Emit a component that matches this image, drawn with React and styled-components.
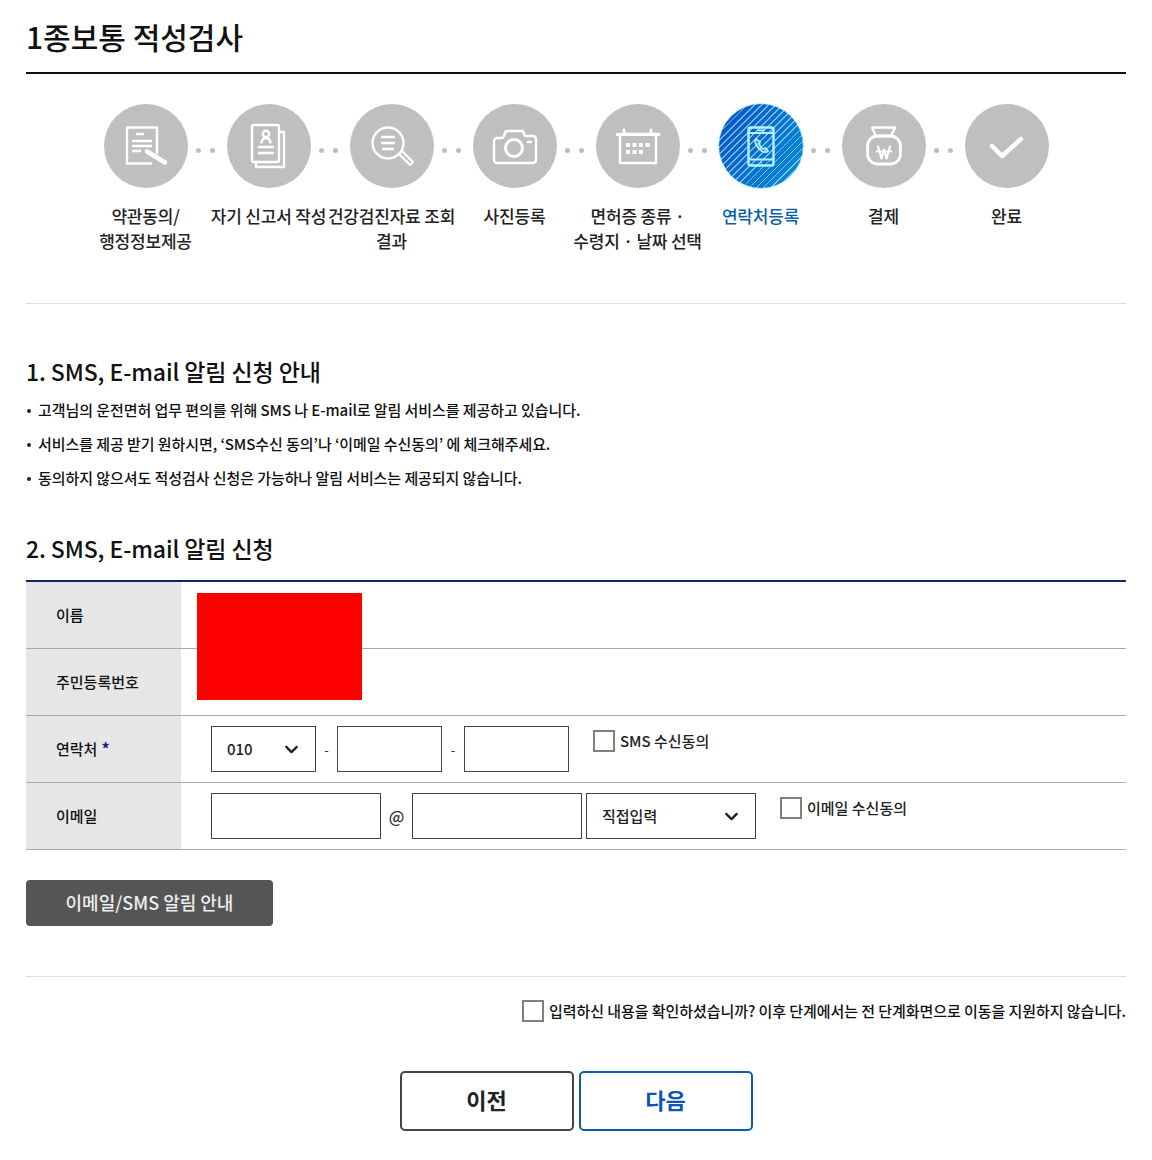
import React from 'react';
import styled, { createGlobalStyle } from 'styled-components';
import { ChevronDown } from 'lucide-react';

const GlobalStyle = createGlobalStyle`
body {
  margin: 0;
  background: #fff;
  color: #111;
  font-family: "Noto Sans CJK KR", "Noto Sans", sans-serif;
}
`;

const Page = styled.div`
  width: 1100px;
  height: 1160px;
  margin-left: 26px;
  position: relative;
`;

const PageTitle = styled.h1`
  margin: 0;
  height: 74px;
  box-sizing: border-box;
  padding-top: 14px;
  font-size: 30px;
  line-height: 44px;
  font-weight: 500;
  color: #111;
  border-bottom: 2px solid #111;
`;

const StepList = styled.ol`
  list-style: none;
  margin: 0;
  padding: 30px 0 0;
  height: 230px;
  box-sizing: border-box;
  border-bottom: 1px solid #ddd;
  display: flex;
  justify-content: center;
`;

const StepItem = styled.li`
  width: 123px;
  display: flex;
  flex-direction: column;
  align-items: center;
  position: relative;
  &:not(:last-child)::after {
    content: '';
    position: absolute;
    left: 112px;
    top: 44px;
    width: 5px;
    height: 5px;
    border-radius: 50%;
    background: #bdbdbd;
    box-shadow: 14px 0 0 #bdbdbd;
  }
`;

const StepCircle = styled.div`
  width: 84px;
  height: 84px;
  border-radius: 50%;
  background: ${props => props.$active
    ? 'repeating-linear-gradient(135deg, rgba(190,245,255,0.6) 0 1.2px, transparent 1.2px 5px), linear-gradient(120deg, #0a50c4, #0a8fd8)'
    : '#bfbfbf'};
  box-shadow: ${props => props.$active ? '0 0 1px 0.5px #5fe0ee' : 'none'};
  svg {
    display: block;
  }
`;

const StepLabel = styled.div`
  margin-top: 15px;
  font-size: 17px;
  line-height: 25px;
  letter-spacing: -0.2px;
  text-align: center;
  white-space: nowrap;
  font-weight: 500;
  color: ${props => props.$active ? '#0a5fa8' : '#222'};
`;

const SectionTitle = styled.h2`
  margin: ${props => props.$top}px 0 0;
  font-size: 23px;
  line-height: 36px;
  letter-spacing: -0.1px;
  font-weight: 500;
  color: #111;
`;

const NoticeList = styled.ul`
  list-style: none;
  margin: 4px 0 0;
  padding: 0;
`;

const NoticeItem = styled.li`
  position: relative;
  padding-left: 12px;
  height: 34px;
  font-size: 15px;
  line-height: 34px;
  font-weight: 500;
  color: #111;
  letter-spacing: -0.07px;
  &::before {
    content: '';
    position: absolute;
    left: 1px;
    top: 16px;
    width: 4px;
    height: 4px;
    border-radius: 50%;
    background: #222;
  }
`;

const FormTable = styled.div`
  position: relative;
  margin-top: 14px;
  border-top: 2px solid #0b2a63;
`;

const FormRow = styled.div`
  display: flex;
  height: 67px;
  box-sizing: border-box;
  border-bottom: 1px solid #aaa;
`;

const RowHead = styled.div`
  width: 155px;
  box-sizing: border-box;
  padding: 0 0 2px 30px;
  background: #e6e6e6;
  display: flex;
  align-items: center;
  font-size: 15px;
  font-weight: 500;
  color: #111;
`;

const Required = styled.span`
  color: #0b2a8a;
  font-size: 16px;
  font-weight: 700;
  margin-left: 4px;
`;

const RowBody = styled.div`
  flex: 1;
  display: flex;
  align-items: flex-start;
  padding: 10px 0 0 30px;
`;

const TextBox = styled.input`
  width: ${props => props.$w}px;
  height: 46px;
  box-sizing: border-box;
  border: 1px solid #444;
  border-radius: 0;
  background: #fff;
  padding: 0 10px;
  outline: none;
`;

const Separator = styled.span`
  width: ${props => props.$w}px;
  height: 46px;
  display: flex;
  align-items: center;
  justify-content: center;
  font-size: ${props => props.$size}px;
  font-weight: ${props => props.$bold ? 500 : 400};
  color: #333;
`;

const SelectBox = styled.div`
  width: ${props => props.$w}px;
  height: 46px;
  box-sizing: border-box;
  border: 1px solid #444;
  margin-left: ${props => props.$ml || 0}px;
  padding: 0 13px 2px 15px;
  display: flex;
  align-items: center;
  justify-content: space-between;
  font-size: 15px;
  font-weight: 500;
  color: #222;
  svg {
    margin-top: 2px;
  }
`;

const CheckBox = styled.input.attrs({ type: 'checkbox' })`
  appearance: none;
  width: 22px;
  height: 22px;
  margin: 0;
  box-sizing: border-box;
  border: 2px solid #808080;
  background: #fff;
  flex: none;
`;

const Agree = styled.label`
  display: flex;
  align-items: center;
  gap: 5px;
  margin: 4px 0 0 24px;
  font-size: 15px;
  font-weight: 500;
  line-height: 22px;
  color: #222;
`;

const RedactBox = styled.div`
  position: absolute;
  left: 171px;
  top: 11px;
  width: 165px;
  height: 107px;
  background: #ff0000;
`;

const GuideButton = styled.button`
  display: block;
  width: 247px;
  height: 46px;
  margin-top: 30px;
  padding: 0 0 2px;
  border: 0;
  border-radius: 4px;
  background: #555;
  color: #eee;
  font-family: inherit;
  font-size: 18px;
  font-weight: 500;
`;

const ConfirmRow = styled.label`
  margin-top: 50px;
  padding-top: 23px;
  border-top: 1px solid #ddd;
  display: flex;
  justify-content: flex-end;
  align-items: center;
  gap: 5px;
  font-size: 15px;
  font-weight: 500;
  line-height: 22px;
  letter-spacing: -0.07px;
  color: #111;
  white-space: nowrap;
`;

const ButtonRow = styled.div`
  margin-top: 49px;
  display: flex;
  justify-content: center;
  gap: 5px;
`;

const NavButton = styled.button`
  width: 174px;
  height: 60px;
  box-sizing: border-box;
  padding: 0 0 4px;
  background: #fff;
  border-radius: 5px;
  border: 2px solid ${props => props.$primary ? '#0a5fa8' : '#444'};
  color: ${props => props.$primary ? '#0a55b8' : '#222'};
  font-family: inherit;
  font-size: 22px;
  font-weight: 700;
`;

const Icon = ({ children, color = '#fff' }) => (
  <svg width="84" height="84" viewBox="0 0 84 84" fill="none" stroke={color} strokeWidth="2.4" strokeLinecap="round" strokeLinejoin="round">
    {children}
  </svg>
);

const icons = [
  <Icon key="terms">
    <path d="M53 49V23.5H23v36h24" />
    <path d="M32 30h8M28 37h20M28 42h20M28 47h9" strokeLinecap="butt" />
    <path d="M43 47.5l18 11" strokeWidth="4.5" />
  </Icon>,
  <Icon key="report">
    <rect x="25" y="21" width="27" height="37" rx="1.5" />
    <path d="M29 58v5h28V28h-5" />
    <circle cx="39" cy="30" r="3.2" />
    <path d="M34.5 38.5c.5-3 2-4.5 4.5-4.5s4 1.5 4.5 4.5" />
    <path d="M31 43h16M31 49h16" strokeLinecap="butt" />
  </Icon>,
  <Icon key="search">
    <circle cx="38" cy="39" r="15.5" />
    <path d="M31 33h14M31 39h14M32 45h12" strokeLinecap="butt" />
    <path d="M50 51l10 10 3-3-10-10" />
  </Icon>,
  <Icon key="photo">
    <path d="M24 34h6l3-7h17l2 5h8a3 3 0 0 1 3 3v21a3 3 0 0 1-3 3H24a3 3 0 0 1-3-3V37a3 3 0 0 1 3-3z" />
    <circle cx="41" cy="44" r="8.5" strokeWidth="3" />
    <path d="M55 38h3" />
  </Icon>,
  <Icon key="calendar">
    <rect x="24" y="30" width="36" height="29" />
    <path d="M21 30.5h42M28 26v4M55 26v4" strokeWidth="2.8" />
    <path d="M30 41h4M36.5 41h4M43 41h4M49.5 41h4M30 48h4M36.5 48h4M43 48h4" strokeWidth="4" strokeLinecap="butt" />
  </Icon>,
  <Icon key="phone" color="#b5f2ff">
    <rect x="29.5" y="23.5" width="25" height="38" rx="2" />
    <path d="M30 29h24M30 55.5h24M39 26.3h6M42 58.5h.1" strokeWidth="1.8" />
    <path d="M37 35c-1 1-1 3 0 5 2 4 5 7 8 8 2 .5 3 0 4-1l-3-3-2 1c-2-1-3-3-4-5l1-2z" strokeWidth="1.8" />
  </Icon>,
  <Icon key="payment">
    <path d="M30 23.5h23l-4 8.500H34z" />
    <rect x="25.5" y="32" width="33" height="28" rx="10" strokeWidth="2.8" />
    <path d="M36 42.5l3.5 12 2.500-9 2.500 9 3.500-12M35 47.500h14" strokeWidth="2.2" />
  </Icon>,
  <Icon key="done">
    <path d="M27 42l10 10 19-17" strokeWidth="4.5" />
  </Icon>,
];

const steps = [
  ['약관동의/', '행정정보제공'],
  ['자기 신고서 작성'],
  ['건강검진자료 조회', '결과'],
  ['사진등록'],
  ['면허증 종류 ·', '수령지 · 날짜 선택'],
  ['연락처등록'],
  ['결제'],
  ['완료'],
];

const notices = [
  '고객님의 운전면허 업무 편의를 위해 SMS 나 E-mail로 알림 서비스를 제공하고 있습니다.',
  '서비스를 제공 받기 원하시면, ‘SMS수신 동의’나 ‘이메일 수신동의’ 에 체크해주세요.',
  '동의하지 않으셔도 적성검사 신청은 가능하나 알림 서비스는 제공되지 않습니다.',
];

const App = () => (
  <Page>
    <GlobalStyle />
    <PageTitle>1종보통 적성검사</PageTitle>
    <StepList>
      {steps.map((lines, i) => (
        <StepItem key={lines[0]}>
          <StepCircle $active={i === 5}>{icons[i]}</StepCircle>
          <StepLabel $active={i === 5}>
            {lines.map(line => <div key={line}>{line}</div>)}
          </StepLabel>
        </StepItem>
      ))}
    </StepList>

    <SectionTitle $top={49}>1. SMS, E-mail 알림 신청 안내</SectionTitle>
    <NoticeList>
      {notices.map(text => <NoticeItem key={text}>{text}</NoticeItem>)}
    </NoticeList>

    <SectionTitle $top={35}>2. SMS, E-mail 알림 신청</SectionTitle>
    <FormTable>
      <FormRow>
        <RowHead>이름</RowHead>
      </FormRow>
      <FormRow>
        <RowHead>주민등록번호</RowHead>
      </FormRow>
      <FormRow>
        <RowHead>연락처<Required>*</Required></RowHead>
        <RowBody>
          <SelectBox $w={105}>010<ChevronDown size={21} strokeWidth={2.6} color="#222" /></SelectBox>
          <Separator $w={21} $size={13}>-</Separator>
          <TextBox $w={105} />
          <Separator $w={22} $size={13}>-</Separator>
          <TextBox $w={105} />
          <Agree><CheckBox />SMS 수신동의</Agree>
        </RowBody>
      </FormRow>
      <FormRow>
        <RowHead>이메일</RowHead>
        <RowBody>
          <TextBox $w={170} />
          <Separator $w={31} $size={16} $bold>@</Separator>
          <TextBox $w={170} />
          <SelectBox $w={170} $ml={4}>직접입력<ChevronDown size={21} strokeWidth={2.6} color="#222" /></SelectBox>
          <Agree><CheckBox />이메일 수신동의</Agree>
        </RowBody>
      </FormRow>
      <RedactBox />
    </FormTable>

    <GuideButton>이메일/SMS 알림 안내</GuideButton>

    <ConfirmRow>
      <CheckBox />
      입력하신 내용을 확인하셨습니까? 이후 단계에서는 전 단계화면으로 이동을 지원하지 않습니다.
    </ConfirmRow>

    <ButtonRow>
      <NavButton>이전</NavButton>
      <NavButton $primary>다음</NavButton>
    </ButtonRow>
  </Page>
);

export default App;
